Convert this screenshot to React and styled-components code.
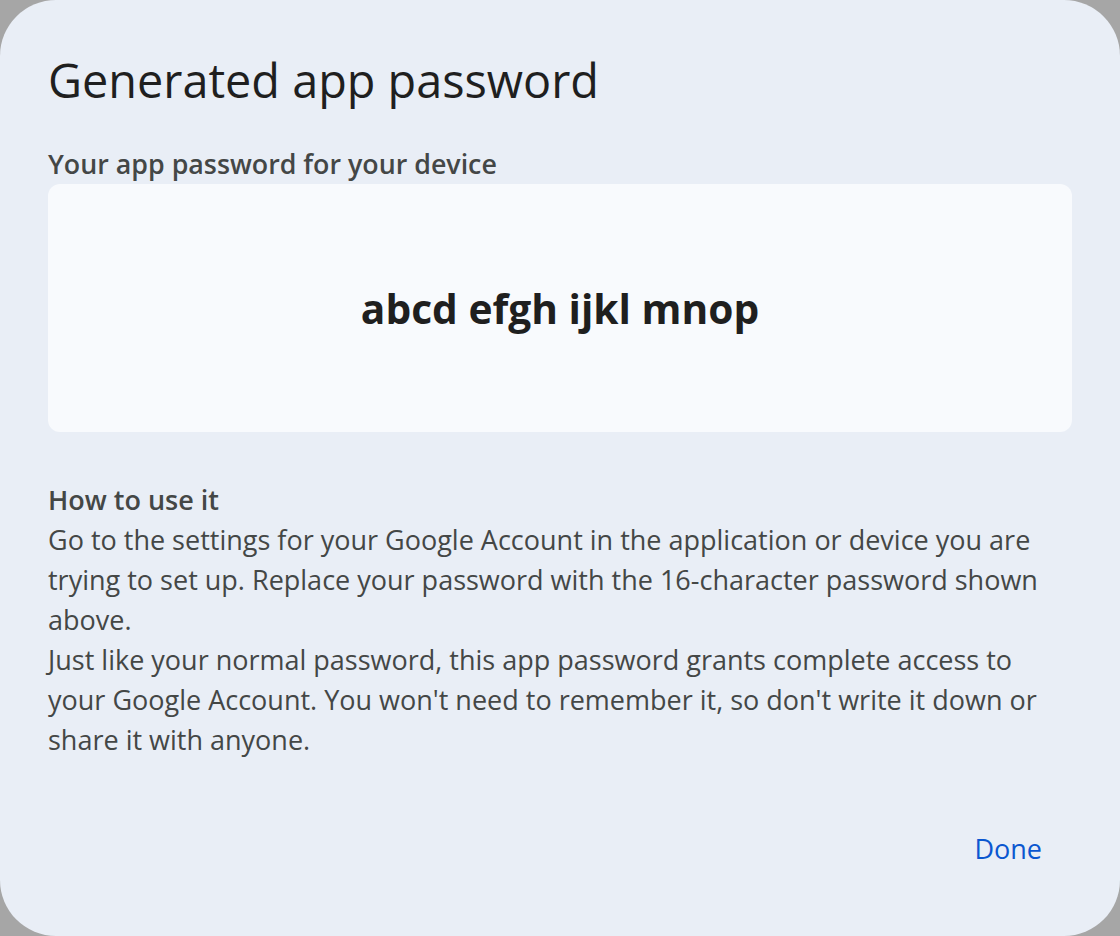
import React from "react";
import styled, { createGlobalStyle } from "styled-components";

const GlobalStyle = createGlobalStyle`
  html, body {
    margin: 0;
    padding: 0;
    background: #a6a6a6;
  }
  body {
    font-family: "Open Sans", Roboto, sans-serif;
  }
`;

const Dialog = styled.div`
  width: 1120px;
  height: 936px;
  box-sizing: border-box;
  background: #e9eef6;
  border-radius: 56px;
  padding: 52px 48px 0;
  display: flex;
  flex-direction: column;
`;

const Title = styled.h1`
  margin: 0;
  font-size: 46.8px;
  line-height: 56px;
  font-weight: 400;
  color: #1f1f1f;
`;

const Label = styled.div`
  margin-top: 38px;
  font-size: 26.8px;
  line-height: 36px;
  font-weight: 600;
  color: #444746;
`;

const PasswordBox = styled.div`
  margin-top: 2px;
  height: 248px;
  border-radius: 12px;
  background: #f8fafd;
  display: flex;
  align-items: center;
  justify-content: center;
  font-size: 40.7px;
  font-weight: 700;
  color: #1f1f1f;
`;

const Section = styled.div`
  margin-top: 48px;
  font-size: 27px;
  line-height: 40px;
  color: #444746;
`;

const Heading = styled.div`
  font-weight: 600;
`;

const Paragraph = styled.p`
  margin: 0;
`;

const Actions = styled.div`
  margin-top: 64px;
  display: flex;
  justify-content: flex-end;
`;

const TextButton = styled.button`
  height: 48px;
  padding: 0 30px;
  border: none;
  background: transparent;
  color: #0b57d0;
  font-family: inherit;
  font-size: 27px;
  font-weight: 500;
  cursor: pointer;
`;

export default function App() {
  return (
    <>
      <GlobalStyle />
      <Dialog>
        <Title>Generated app password</Title>
        <Label>Your app password for your device</Label>
        <PasswordBox>abcd efgh ijkl mnop</PasswordBox>
        <Section>
          <Heading>How to use it</Heading>
          <Paragraph>
            Go to the settings for your Google Account in the application or device you are trying to set up. Replace
            your password with the 16-character password shown above.
          </Paragraph>
          <Paragraph>
            Just like your normal password, this app password grants complete access to your Google Account. You won't
            need to remember it, so don't write it down or share it with anyone.
          </Paragraph>
        </Section>
        <Actions>
          <TextButton>Done</TextButton>
        </Actions>
      </Dialog>
    </>
  );
}
